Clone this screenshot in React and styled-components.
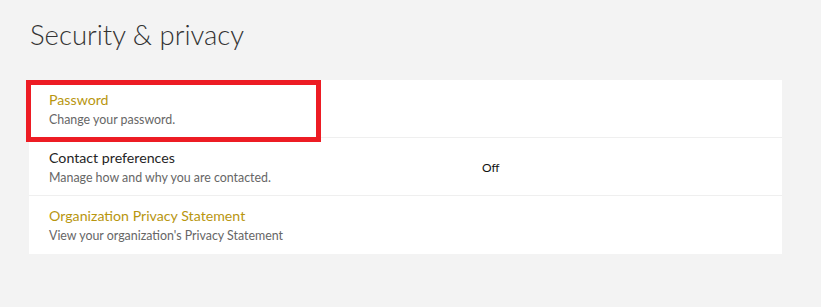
import React from "react";
import styled, { createGlobalStyle } from "styled-components";

const Global = createGlobalStyle`
  html, body { margin: 0; padding: 0; background: #f3f3f3; }
  body { font-family: Lato, "Noto Sans", sans-serif; }
`;

const Page = styled.div`
  padding: 17px 39px 0 29px;
  width: 821px;
  box-sizing: border-box;
`;

const Title = styled.h1`
  margin: 0 0 0 1px;
  font-family: Lato, "Noto Sans", sans-serif;
  font-weight: 300;
  font-size: 27.5px;
  line-height: 36px;
  color: #333;
`;

const Card = styled.div`
  margin-top: 27px;
  background: #fff;
  display: flex;
  flex-direction: column;
`;

const Row = styled.div`
  position: relative;
  height: 58px;
  box-sizing: border-box;
  padding: 10px 20px 0;
  display: grid;
  grid-template-columns: 433px 1fr;
  align-items: center;
  border-bottom: ${(p) => (p.$last ? "none" : "1px solid #efefef")};
`;

const Texts = styled.div`
  display: flex;
  flex-direction: column;
  align-self: start;
`;

const RowTitle = styled.div`
  font-size: 14.2px;
  line-height: 20px;
  color: ${(p) => (p.$link ? "#b8960f" : "#252525")};
`;

const RowSub = styled.div`
  font-size: 12.4px;
  line-height: 18px;
  color: #666;
  margin-top: 1px;
`;

const Value = styled.div`
  font-size: 12px;
  color: #111;
  margin-top: -9px;
`;

const Highlight = styled.div`
  position: absolute;
  left: -3px;
  top: 0;
  width: 295px;
  height: 62px;
  box-sizing: border-box;
  border: 5px solid #ed1c24;
  pointer-events: none;
`;

export default function App() {
  return (
    <>
      <Global />
      <Page>
        <Title>Security &amp; privacy</Title>
        <Card>
          <Row>
            <Texts>
              <RowTitle $link>Password</RowTitle>
              <RowSub>Change your password.</RowSub>
            </Texts>
            <Highlight />
          </Row>
          <Row>
            <Texts>
              <RowTitle>Contact preferences</RowTitle>
              <RowSub>Manage how and why you are contacted.</RowSub>
            </Texts>
            <Value>Off</Value>
          </Row>
          <Row $last>
            <Texts>
              <RowTitle $link>Organization Privacy Statement</RowTitle>
              <RowSub>View your organization's Privacy Statement</RowSub>
            </Texts>
          </Row>
        </Card>
      </Page>
    </>
  );
}
